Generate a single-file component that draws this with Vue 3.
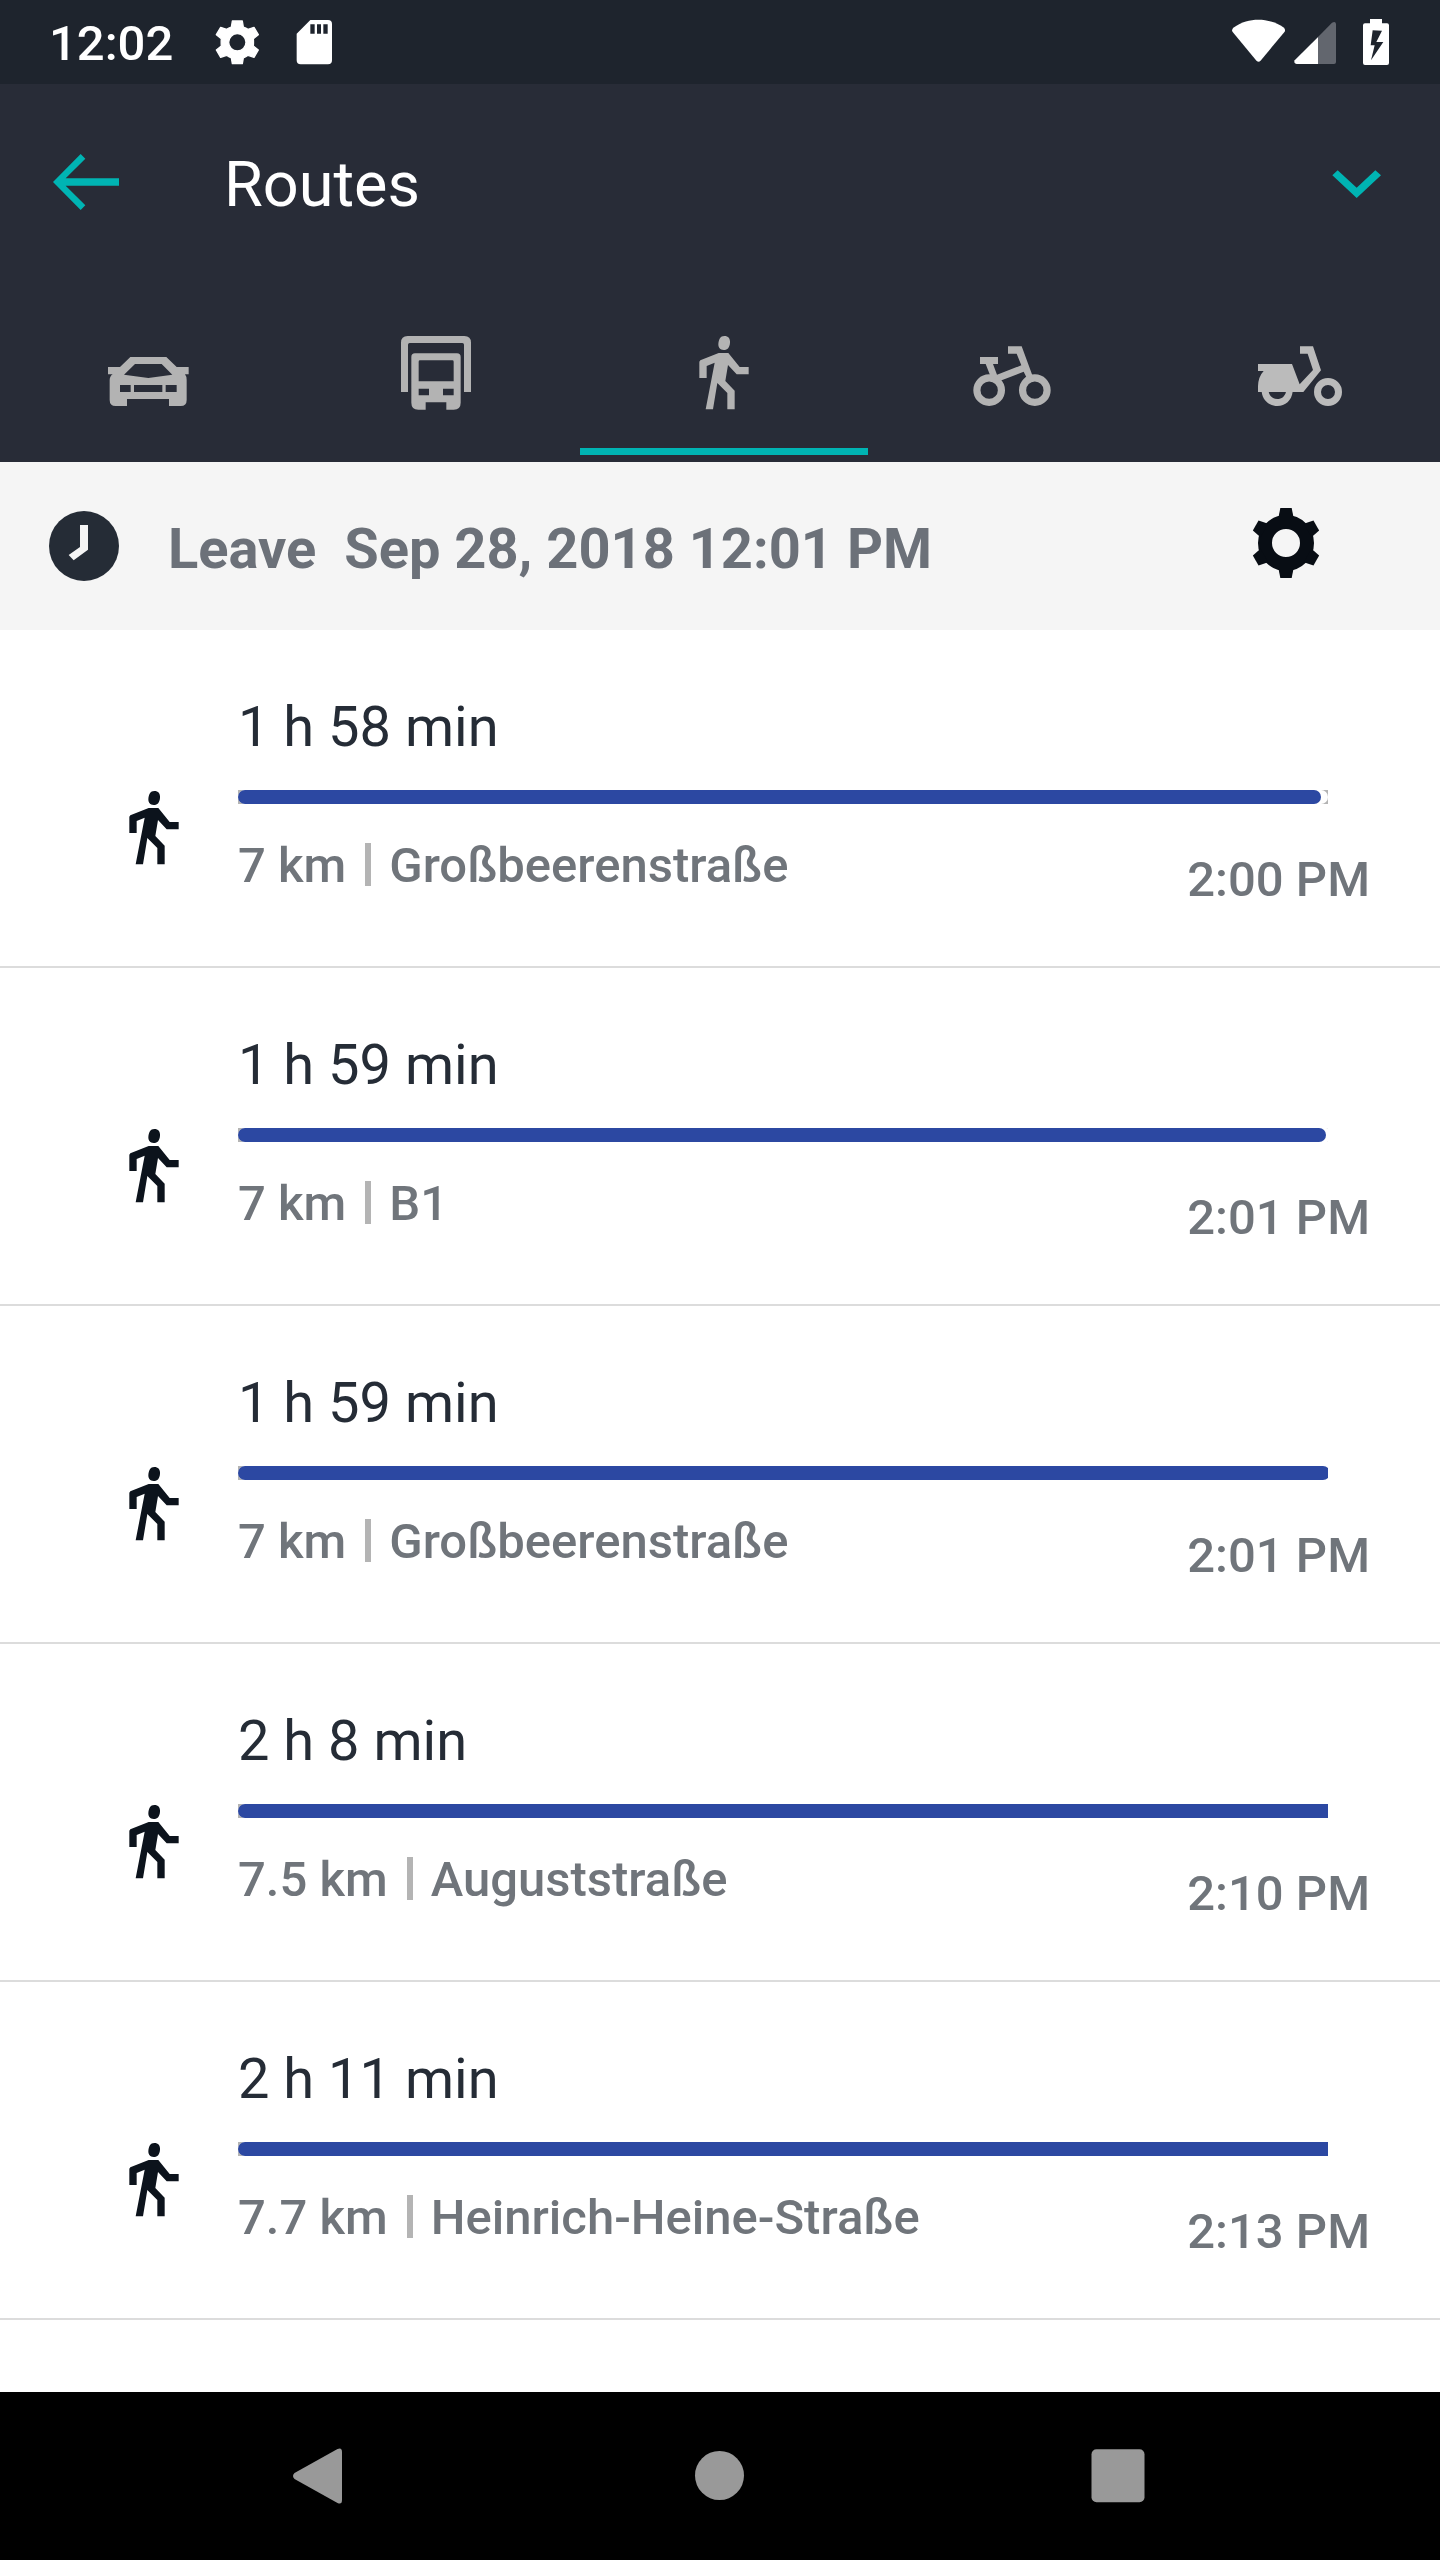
<script setup>
const routes = [
  { duration: '1 h 58 min', distance: '7 km', street: 'Großbeerenstraße', arrival: '2:00 PM', bar: 1083 },
  { duration: '1 h 59 min', distance: '7 km', street: 'B1', arrival: '2:01 PM', bar: 1088 },
  { duration: '1 h 59 min', distance: '7 km', street: 'Großbeerenstraße', arrival: '2:01 PM', bar: 1092 },
  { duration: '2 h 8 min', distance: '7.5 km', street: 'Auguststraße', arrival: '2:10 PM', bar: 1170 },
  { duration: '2 h 11 min', distance: '7.7 km', street: 'Heinrich-Heine-Straße', arrival: '2:13 PM', bar: 1200 },
]
const walker =
  'M463 78C475 78 481 86 480 98C479 112 473 120 461 120C450 120 445 113 445 103C446 88 451 78 463 78Z' +
  'M446 129H475L509 171H536V193H500L474 165L466 213L494 242V298H472V249L442 219L429 298H407L434 158L410 168V204H388V155L391 151Z'
const teeth = [0, 60, 120, 180, 240, 300]
</script>

<template>
  <div class="screen">
    <header class="status">
      <span class="clock">12:02</span>
      <svg class="s-gear" viewBox="642 57 141 141" width="47" height="47">
        <path fill="#fff" stroke="#fff" stroke-width="4" stroke-linejoin="round" fill-rule="evenodd"
          d="M697 63H727L730 81Q738 84 744 88L762 82L775 104L760 116Q761 127 760 138L775 150L762 172L744 166Q738 171 730 174L727 191H697L694 174Q686 171 680 166L662 172L649 150L664 138Q663 127 664 116L649 104L662 82L680 88Q686 84 694 81ZM738 127A26 26 0 1 0 686 127A26 26 0 1 0 738 127Z" />
      </svg>
      <svg class="s-card" viewBox="888 57 111 141" width="37" height="47">
        <path fill="#fff" fill-rule="evenodd" d="M931 60H984Q996 60 996 72V181Q996 193 984 193H902Q890 193 890 181V101ZM931 73V101H944V73ZM951 73V101H963V73ZM970 73V101H983V73Z" />
      </svg>
      <svg class="s-right" viewBox="150 54 480 144" width="160" height="48">
        <path fill="#fff" d="M160 83C185 65 210 59 235 59S288 66 312 83Q317 89 314 95L241 183Q236 188 230 183L158 96Q154 89 160 83Z" />
        <path fill="#fff" d="M350 192H415V110L344 181Q340 190 350 192Z" />
        <path fill="#62666e" d="M414 111L456 68Q467 62 468 72V186Q468 192 462 192H414Z" />
        <path fill="#fff" fill-rule="evenodd" d="M570 57H606V70H621Q627 70 627 76V189Q627 195 621 195H555Q549 195 549 189V76Q549 70 555 70H570ZM578 91L572 136H584L573 181L610 126H589L606 92Z" />
      </svg>
    </header>

    <div class="toolbar">
      <svg class="back" viewBox="156 456 204 180" width="68" height="60">
        <path fill="#00b4b3" d="M159 546L242 462L256 476L197 535H357V557H197L256 616L242 630Z" />
      </svg>
      <h1>Routes</h1>
      <svg class="chevron" viewBox="456 507 150 90" width="50" height="30">
        <path fill="#00b4b3" d="M473 511L530 563L586 511L603 526L530 594L457 526Z" />
      </svg>
    </div>

    <nav class="tabs">
      <div class="tab">
        <svg viewBox="78 63 252 252" width="84" height="84" fill="#b3b3b3" fill-rule="evenodd">
          <path d="M151 141H259L290 171H326V193H315Q320 199 320 210V270Q320 288 302 288H267V267H141V288H107Q89 288 89 270V210Q89 199 98 193H84V171H120ZM165 162L132 194L205 204L277 194L245 162ZM120 225V246H152V225ZM162 225V246H247V225ZM257 225V246H290V225Z" />
        </svg>
      </div>
      <div class="tab">
        <svg viewBox="72 63 252 252" width="84" height="84" fill="#b3b3b3" fill-rule="evenodd">
          <path d="M93 246V98Q93 78 113 78H283Q303 78 303 98V246H282V104Q282 99 277 99H119Q114 99 114 104V246Z" />
          <path d="M135 130H261Q272 130 272 141V278Q272 299 251 299H229V277H167V299H145Q124 299 124 278V141Q124 130 135 130ZM150 151Q146 151 146 155V214H251V155Q251 151 247 151ZM146 236V256H177V236ZM219 236V256H251V236Z" />
        </svg>
      </div>
      <div class="tab active">
        <svg viewBox="336 63 252 252" width="84" height="84" fill="#b3b3b3"><path :d="walker" /></svg>
      </div>
      <div class="tab">
        <svg viewBox="60 63 252 252" width="84" height="84" fill="#b3b3b3">
          <g fill="none" stroke="#b3b3b3" stroke-width="21.5">
            <circle cx="117.5" cy="240.500" r="36.800" />
            <circle cx="254.500" cy="240.500" r="36.800" />
          </g>
          <path d="M90 141H144V162H129L141 194L214 166L200 131H174V109H215L247 196L230 203L221 185L155 211L122 200L107 162H90Z" />
        </svg>
      </div>
      <div class="tab">
        <svg viewBox="924 63 252 252" width="84" height="84" fill="#bbb">
          <circle cx="1134" cy="246" r="31.500" fill="none" stroke="#bbb" stroke-width="21" />
          <path d="M924 162H1026L1049 223L1089 180L1073 131H1050V109H1089L1113 181L1060 246H924V228Q925 200 941 183H924Z" />
          <path d="M935 245C938 271 958 288 982 288S1025 271 1028 245H1008C1005 259 995 267 982 267S959 259 956 245Z" />
        </svg>
      </div>
    </nav>

    <section class="leave">
      <svg viewBox="147 183 210 210" width="70" height="70">
        <circle cx="252" cy="288" r="105" fill="#252c36" />
        <path fill="#f5f5f5" d="M240 225H264V299L221 331L206 315L240 291Z" />
      </svg>
      <span class="when">Leave&nbsp; Sep 28, 2018 12:01 PM</span>
      <svg class="gear" viewBox="273 174 210 210" width="70" height="70">
        <circle cx="378" cy="279" r="63" fill="none" stroke="#080d14" stroke-width="42" />
        <path v-for="a in teeth" :key="a" fill="#080d14" d="M361 174H395L401 204H355Z" :transform="`rotate(${a} 378 279)`" />
      </svg>
    </section>

    <main class="list">
      <article v-for="(r, i) in routes" :key="i" class="route">
        <svg class="walk" viewBox="336 63 252 252" width="84" height="84" fill="#0c131c"><path :d="walker" /></svg>
        <div class="info">
          <div class="duration">{{ r.duration }}</div>
          <div class="track">
            <div class="halo" :style="{ width: r.bar + 7 + 'px' }">
              <div class="fill" :style="{ width: r.bar + 'px' }"></div>
            </div>
          </div>
          <div class="meta">
            <span>{{ r.distance }}</span>
            <i class="sep"></i>
            <span>{{ r.street }}</span>
            <span class="arrival">{{ r.arrival }}</span>
          </div>
        </div>
      </article>
    </main>

    <footer class="navbar">
      <svg viewBox="278 2434 84 84" width="84" height="84" fill="#999">
        <path d="M294.500 2473L337.500 2449Q342 2447 342 2452V2500Q342 2505 337.500 2503L294.500 2479Q291.500 2476 294.500 2473Z" />
      </svg>
      <svg viewBox="678 2434 84 84" width="84" height="84" fill="#999"><circle cx="719.500" cy="2475.500" r="24.500" /></svg>
      <svg viewBox="1078 2434 84 84" width="84" height="84" fill="#999"><rect x="1091.500" y="2449.300" width="53" height="53" rx="5" /></svg>
    </footer>
  </div>
</template>

<style>
body {
  margin: 0;
}
</style>

<style scoped>
.screen {
  width: 1440px;
  height: 2560px;
  display: flex;
  flex-direction: column;
  background: #fff;
  font-family: Roboto, sans-serif;
  overflow: hidden;
}
svg {
  display: block;
  flex: none;
}
.status {
  height: 84px;
  box-sizing: border-box;
  background: #1e242d;
  display: flex;
  align-items: flex-start;
  padding: 0 50px 0 49px;
  color: #fff;
}
.clock {
  width: 165px;
  font-size: 49px;
  font-weight: 500;
  line-height: 58px;
  padding-top: 15px;
}
.s-gear {
  margin-top: 19px;
}
.s-card {
  margin: 19px 0 0 35px;
}
.s-right {
  margin: 18px 0 0 auto;
}
.toolbar {
  height: 196px;
  background: #282c37;
  display: flex;
  align-items: flex-start;
  padding: 0 58px 0 52px;
}
.back {
  margin-top: 68px;
}
h1 {
  margin: 64px auto 0 104px;
  font-size: 63px;
  line-height: 73px;
  font-weight: 400;
  color: #fff;
}
.chevron {
  margin-top: 85px;
}
.tabs {
  height: 182px;
  background: #282c37;
  display: flex;
  padding-left: 4px;
  overflow: hidden;
}
.tab {
  flex: none;
  width: 288px;
  height: 175px;
  box-sizing: border-box;
  padding-top: 51px;
  display: flex;
  justify-content: center;
}
.active {
  border-bottom: 7px solid #00b4b3;
}
.leave {
  height: 168px;
  background: #f5f5f5;
  display: flex;
  align-items: center;
  padding: 0 119px 0 49px;
}
.when {
  margin: 5px auto 0 49px;
  font-size: 56px;
  line-height: 66px;
  font-weight: 700;
  color: #6c7179;
  white-space: nowrap;
}
.gear {
  margin-bottom: 6px;
}
.list {
  height: 1762px;
}
.route {
  height: 338px;
  box-sizing: border-box;
  border-bottom: 2px solid #dcdcdc;
  display: flex;
  padding-left: 112px;
}
.walk {
  margin: 156px 42px 0 0;
}
.info {
  flex: 1;
  padding-top: 64px;
}
.duration {
  font-size: 56px;
  line-height: 66px;
  color: #252c36;
}
.track {
  width: 1090px;
  height: 14px;
  margin-top: 30px;
  background: #b4b4b4;
  overflow: hidden;
}
.halo {
  height: 14px;
  border-radius: 7px;
  background: #fff;
}
.fill {
  height: 14px;
  border-radius: 7px;
  background: #2c48a2;
}
.meta {
  margin-top: 33px;
  display: flex;
  align-items: flex-start;
  font-size: 49px;
  line-height: 58px;
  font-weight: 500;
  color: #70757b;
  padding-right: 70px;
  white-space: nowrap;
}
.sep {
  width: 6px;
  height: 43px;
  margin: 6px 18px 0 19px;
  background: #b4b4b4;
}
.arrival {
  margin: 14px 0 0 auto;
}
.navbar {
  height: 168px;
  background: #000;
  display: flex;
  align-items: center;
  justify-content: center;
  gap: 316px;
}
</style>
